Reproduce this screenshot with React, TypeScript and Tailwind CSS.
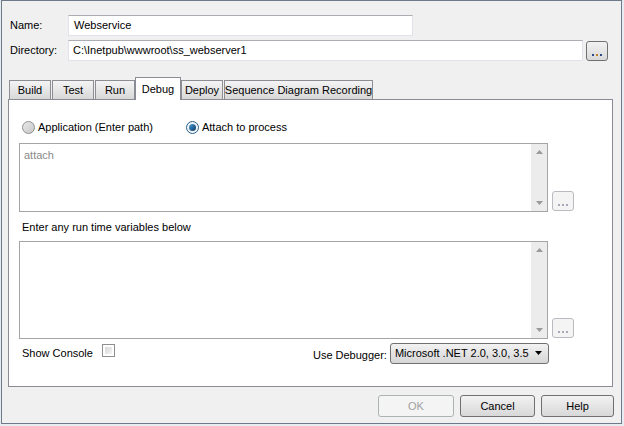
import React from 'react'

const font = { fontFamily: '"Liberation Sans", Arial, sans-serif' }

function DotsButton({ enabled = false }: { enabled?: boolean }) {
  return (
    <div
      className={
        'flex items-end justify-center pb-[4px] w-[22px] h-[20px] rounded-[3px] border ' +
        (enabled
          ? 'border-[#707070] bg-gradient-to-b from-[#f2f2f2] to-[#d9d9d9]'
          : 'border-[#b8bcc0] bg-[#f4f4f4]')
      }
    >
      <div className="flex gap-[2px]">
        {[0, 1, 2].map((i) => (
          <div
            key={i}
            className={'w-[2px] h-[2px] ' + (enabled ? (i === 1 ? 'bg-[#c08020]' : 'bg-[#2a4a8a]') : 'bg-[#a8a8b8]')}
          />
        ))}
      </div>
    </div>
  )
}

function ScrollBar() {
  return (
    <div className="w-[16px] h-full bg-[#ececec] flex flex-col items-center justify-between py-[6px]">
      <svg width="7" height="4" viewBox="0 0 7 4">
        <path d="M0 4 L3.5 0 L7 4 Z" fill="#9a9a9a" />
      </svg>
      <svg width="7" height="4" viewBox="0 0 7 4">
        <path d="M0 0 L3.5 4 L7 0 Z" fill="#9a9a9a" />
      </svg>
    </div>
  )
}

function Tab({ label, width, selected = false, gap = 1 }: { label: string; width: number; selected?: boolean; gap?: number }) {
  if (selected) {
    return (
      <div
        className="relative z-10 -mb-px h-[23px] bg-white border border-b-0 border-[#898c95] flex items-start justify-center pt-[3px] text-black whitespace-nowrap"
        style={{ width, marginLeft: gap }}
      >
        {label}
      </div>
    )
  }
  return (
    <div
      className="h-[19px] border border-b-0 border-[#8c8e94] bg-gradient-to-b from-[#f4f4f4] to-[#d8d8d8] flex items-center justify-center text-black whitespace-nowrap"
      style={{ width, marginLeft: gap }}
    >
      {label}
    </div>
  )
}

export default function App() {
  return (
    <div className="w-[624px] h-[426px] bg-[#e8ecf0] text-[11px] text-black overflow-hidden" style={font}>
      <div className="ml-[1px] w-[621px] h-[424px] border border-[#6c7a89] bg-[#f0f0f0] flex flex-col">
        {/* Name */}
        <div className="flex items-center mt-[14px]">
          <div className="w-[66px] pl-[8px]">Name:</div>
          <div className="w-[345px] h-[21px] bg-white border border-[#e2e3ea] border-t-[#abadb3] flex items-center pl-[5px]">
            Webservice
          </div>
        </div>
        {/* Directory */}
        <div className="flex items-center mt-[4px]">
          <div className="w-[66px] pl-[8px]">Directory:</div>
          <div className="w-[515px] h-[21px] bg-white border border-[#e2e3ea] border-t-[#abadb3] flex items-center pl-[4px]">
            C:\Inetpub\wwwroot\ss_webserver1
          </div>
          <div className="ml-[3px]">
            <DotsButton enabled />
          </div>
        </div>

        {/* Tabs */}
        <div className="flex items-end mt-[16px] ml-[5px] h-[22px]">
          <Tab label="Build" width={42} gap={2} />
          <Tab label="Test" width={42} />
          <Tab label="Run" width={40} />
          <Tab label="Debug" width={46} selected gap={0} />
          <Tab label="Deploy" width={42} gap={0} />
          <Tab label="Sequence Diagram Recording" width={149} />
        </div>

        {/* Panel */}
        <div className="ml-[6px] w-[605px] h-[288px] bg-white border border-[#898c95] flex flex-col">
          <div className="flex items-center mt-[20px] ml-[13px] h-[14px]">
            <div className="w-[13px] h-[13px] rounded-full border border-[#8e8f8f] bg-gradient-to-br from-[#e8e8e8] to-[#c8c8c8]" />
            <div className="ml-[3px]">Application (Enter path)</div>
            <div className="ml-[33px] w-[13px] h-[13px] rounded-full border border-[#2c628b] bg-[#eef4f8] flex items-center justify-center">
              <div className="w-[7px] h-[7px] rounded-full bg-gradient-to-br from-[#4aa0d8] to-[#0d3a66]" />
            </div>
            <div className="ml-[3px]">Attach to process</div>
          </div>

          <div className="flex items-end mt-[9px] ml-[10px]">
            <div className="w-[529px] h-[69px] border border-[#a5a5a5] flex bg-white">
              <div className="flex-1 pl-[4px] pt-[3px] text-[#8a8a8a]">attach</div>
              <ScrollBar />
            </div>
            <div className="ml-[4px] mb-[1px]">
              <DotsButton />
            </div>
          </div>

          <div className="ml-[13px] mt-[7px]">Enter any run time variables below</div>

          <div className="flex items-end mt-[5px] ml-[10px]">
            <div className="w-[529px] h-[98px] border border-[#a5a5a5] flex bg-white">
              <div className="flex-1" />
              <ScrollBar />
            </div>
            <div className="ml-[4px] mb-[1px]">
              <DotsButton />
            </div>
          </div>

          <div className="flex items-start mt-[4px] ml-[13px] h-[21px]">
            <div className="pt-[2px]">Show Console</div>
            <div className="mt-[1px] ml-[9px] w-[13px] h-[13px] border border-[#8e8f8f] bg-white p-[2px]">
              <div className="w-full h-full bg-gradient-to-br from-[#d8d8d8] to-[#f4f4f4]" />
            </div>
            <div className="ml-[198px] pt-[4px]">Use Debugger:</div>
            <div className="ml-[3px] w-[159px] h-[21px] rounded-[3px] border border-[#707070] bg-gradient-to-b from-[#f2f2f2] to-[#d6d6d6] flex items-center pl-[4px] pr-[6px]">
              <div className="flex-1 whitespace-nowrap">Microsoft .NET 2.0, 3.0, 3.5</div>
              <svg width="7" height="4" viewBox="0 0 7 4">
                <path d="M0 0 L3.5 4 L7 0 Z" fill="#000" />
              </svg>
            </div>
          </div>
        </div>

        {/* Buttons */}
        <div className="flex justify-end mt-[8px] mr-[7px] gap-[6px]">
          <div className="w-[76px] h-[22px] rounded-[3px] border border-[#adb2b5] bg-[#f4f4f4] flex items-center justify-center text-[#a0a0a0]">
            OK
          </div>
          <div className="w-[75px] h-[22px] rounded-[3px] border border-[#707070] bg-gradient-to-b from-[#f2f2f2] to-[#d8d8d8] flex items-center justify-center">
            Cancel
          </div>
          <div className="w-[73px] h-[22px] rounded-[3px] border border-[#707070] bg-gradient-to-b from-[#f2f2f2] to-[#d8d8d8] flex items-center justify-center">
            Help
          </div>
        </div>
      </div>
    </div>
  )
}
